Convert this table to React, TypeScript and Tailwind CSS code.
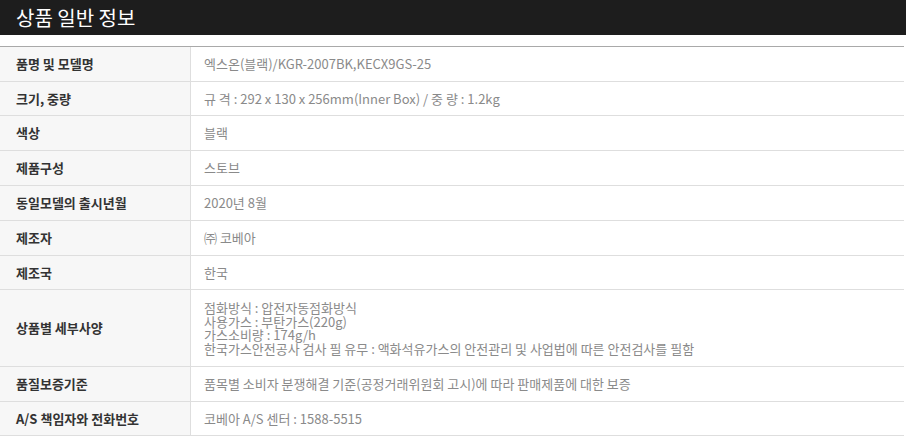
const rows: { label: string; value: string[]; h: string }[] = [
  { label: "품명 및 모델명", value: ["엑스온(블랙)/KGR-2007BK,KECX9GS-25"], h: "h-[35px]" },
  { label: "크기, 중량", value: ["규 격 : 292 x 130 x 256mm(Inner Box) / 중 량 : 1.2kg"], h: "h-[34px]" },
  { label: "색상", value: ["블랙"], h: "h-[35px]" },
  { label: "제품구성", value: ["스토브"], h: "h-[35px]" },
  { label: "동일모델의 출시년월", value: ["2020년 8월"], h: "h-[35px]" },
  { label: "제조자", value: ["㈜ 코베아"], h: "h-[35px]" },
  { label: "제조국", value: ["한국"], h: "h-[34px]" },
  {
    label: "상품별 세부사양",
    value: [
      "점화방식 : 압전자동점화방식",
      "사용가스 : 부탄가스(220g)",
      "가스소비량 : 174g/h",
      "한국가스안전공사 검사 필 유무 : 액화석유가스의 안전관리 및 사업법에 따른 안전검사를 필함",
    ],
    h: "h-[77px]",
  },
  { label: "품질보증기준", value: ["품목별 소비자 분쟁해결 기준(공정거래위원회 고시)에 따라 판매제품에 대한 보증"], h: "h-[35px]" },
  { label: "A/S 책임자와 전화번호", value: ["코베아 A/S 센터 : 1588-5515"], h: "h-[34px]" },
];

export default function App() {
  return (
    <div
      className="w-[906px] h-[439px] bg-white overflow-hidden"
      style={{ fontFamily: '"Noto Sans CJK KR", "Noto Sans", sans-serif' }}
    >
      {/* Title bar */}
      <div className="h-[35px] bg-[#1d1d1d] flex items-center px-4">
        <h2 className="text-[20px] text-white leading-none">상품 일반 정보</h2>
      </div>

      {/* Info table */}
      <div className="mt-[11px] w-[904px] border-t border-[#a9a9a9]">
        {rows.map((row, i) => (
          <div key={i} className={`flex border-b border-[#dedede] ${row.h}`}>
            <div className="w-[191px] shrink-0 bg-[#f7f7f7] border-r border-[#dedede] flex items-center pl-4 text-[13px] font-bold text-[#333]">
              {row.label}
            </div>
            <div className="flex-1 flex flex-col justify-center pl-[13px] text-[13px] text-[#8a8a8a] leading-[13.5px]">
              {row.value.map((line, j) => (
                <span key={j}>{line}</span>
              ))}
            </div>
          </div>
        ))}
      </div>
    </div>
  );
}
